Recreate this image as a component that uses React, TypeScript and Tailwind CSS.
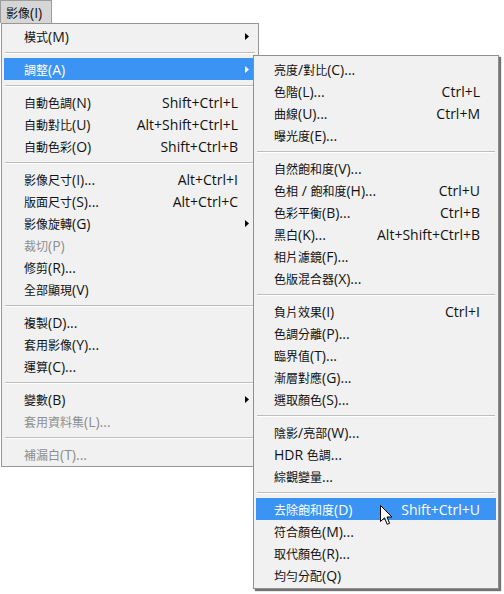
import React from "react";

type Row = { label: string; keys?: string; arrow?: boolean; active?: boolean; off?: boolean } | "sep";

const mainRows: Row[] = [
  { label: "模式(M)", arrow: true },
  "sep",
  { label: "調整(A)", arrow: true, active: true },
  "sep",
  { label: "自動色調(N)", keys: "Shift+Ctrl+L" },
  { label: "自動對比(U)", keys: "Alt+Shift+Ctrl+L" },
  { label: "自動色彩(O)", keys: "Shift+Ctrl+B" },
  "sep",
  { label: "影像尺寸(I)...", keys: "Alt+Ctrl+I" },
  { label: "版面尺寸(S)...", keys: "Alt+Ctrl+C" },
  { label: "影像旋轉(G)", arrow: true },
  { label: "裁切(P)", off: true },
  { label: "修剪(R)..." },
  { label: "全部顯現(V)" },
  "sep",
  { label: "複製(D)..." },
  { label: "套用影像(Y)..." },
  { label: "運算(C)..." },
  "sep",
  { label: "變數(B)", arrow: true },
  { label: "套用資料集(L)...", off: true },
  "sep",
  { label: "補漏白(T)...", off: true },
];

const subRows: Row[] = [
  { label: "亮度/對比(C)..." },
  { label: "色階(L)...", keys: "Ctrl+L" },
  { label: "曲線(U)...", keys: "Ctrl+M" },
  { label: "曝光度(E)..." },
  "sep",
  { label: "自然飽和度(V)..." },
  { label: "色相 / 飽和度(H)...", keys: "Ctrl+U" },
  { label: "色彩平衡(B)...", keys: "Ctrl+B" },
  { label: "黑白(K)...", keys: "Alt+Shift+Ctrl+B" },
  { label: "相片濾鏡(F)..." },
  { label: "色版混合器(X)..." },
  "sep",
  { label: "負片效果(I)", keys: "Ctrl+I" },
  { label: "色調分離(P)..." },
  { label: "臨界值(T)..." },
  { label: "漸層對應(G)..." },
  { label: "選取顏色(S)..." },
  "sep",
  { label: "陰影/亮部(W)..." },
  { label: "HDR 色調..." },
  { label: "綜觀變量..." },
  "sep",
  { label: "去除飽和度(D)", keys: "Shift+Ctrl+U", active: true },
  { label: "符合顏色(M)..." },
  { label: "取代顏色(R)..." },
  { label: "均勻分配(Q)" },
];

// CJK glyphs at 12px, latin a bit larger so widths match the Windows UI font
function Txt({ s }: { s: string }) {
  const parts = s.split(/([\u2E80-\u9FFF\uF900-\uFAFF\uFF00-\uFFEF]+)/).filter(Boolean);
  return (
    <>
      {parts.map((p, i) =>
        /[\u2E80-\u9FFF\uF900-\uFAFF\uFF00-\uFFEF]/.test(p) ? (
          <span key={i} className="text-[12px] font-['Noto_Sans_CJK_TC',sans-serif]">{p}</span>
        ) : (
          <span key={i} className="text-[14px] font-['Open_Sans',sans-serif] whitespace-pre">{p}</span>
        )
      )}
    </>
  );
}

function Arrow({ white }: { white?: boolean }) {
  return (
    <svg width="4" height="7" viewBox="0 0 4 7" className="shrink-0">
      <path d="M0 0 L4 3.5 L0 7 Z" fill={white ? "#ffffff" : "#000000"} />
    </svg>
  );
}

function Menu({ rows, pl, pr }: { rows: Row[]; pl: string; pr: string }) {
  return (
    <>
      {rows.map((r, i) =>
        r === "sep" ? (
          <div key={i} className="h-[11px] flex items-center px-[3px]">
            <div className="w-full border-t border-[#bdbdbd] border-b border-b-white" />
          </div>
        ) : (
          <div
            key={i}
            className={`relative h-[22px] mx-[2px] flex items-center ${pl} ${pr} ${
              r.active ? "bg-[#3b93f3] text-white" : r.off ? "text-[#8e8e8e]" : "text-[#111]"
            }`}
          >
            <div className="flex-1 whitespace-nowrap leading-none"><Txt s={r.label} /></div>
            {r.keys && <div className="whitespace-nowrap leading-none"><Txt s={r.keys} /></div>}
            {r.arrow && (
              <div className="absolute right-[7px] top-[8px] flex">
                <Arrow white={r.active} />
              </div>
            )}
          </div>
        )
      )}
    </>
  );
}

export default function App() {
  return (
    <div className="relative w-[504px] h-[594px] bg-white overflow-hidden">
      {/* menu bar tab */}
      <div className="w-[52px] h-[23px] bg-[#d6d6d6] border border-b-0 border-[#9c9c9c] flex items-center pl-[5px] text-[#111]">
        <span className="leading-none whitespace-nowrap"><Txt s="影像(I)" /></span>
      </div>

      {/* main menu */}
      <div className="ml-[1px] w-[258px] bg-[#f1f1f1] border border-[#969696] pt-[1px] pb-[1px]">
        <Menu rows={mainRows} pl="pl-[20px]" pr="pr-[18px]" />
      </div>

      {/* adjustments submenu */}
      <div className="absolute left-[253px] top-[55px] w-[246px] bg-[#f1f1f1] border border-[#8f8f8f] pt-[2px] pb-[2px] shadow-[2px_2px_1px_rgba(0,0,0,0.55)]">
        <Menu rows={subRows} pl="pl-[18px]" pr="pr-[16px]" />
      </div>

      {/* mouse pointer */}
      <svg width="13" height="21" viewBox="0 0 13 21" className="absolute left-[380px] top-[505px]">
        <path
          d="M0.5 0.5 L0.5 16.5 L4.5 12.8 L7.2 19.3 L9.6 18.3 L7 12 L12 12 Z"
          fill="#ffffff"
          stroke="#000000"
          strokeWidth="1"
          strokeLinejoin="round"
        />
      </svg>
    </div>
  );
}
